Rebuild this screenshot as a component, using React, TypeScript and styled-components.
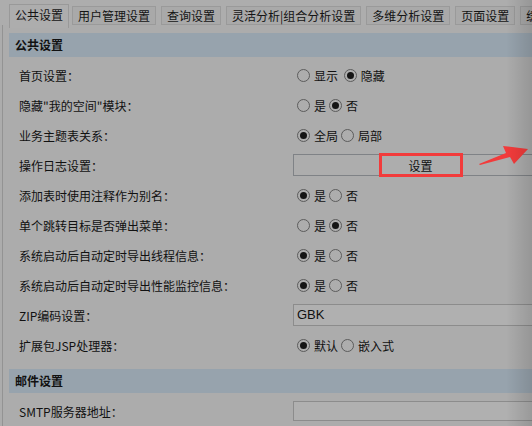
import React from "react";
import styled, { createGlobalStyle } from "styled-components";

const Global = createGlobalStyle`
  html, body { margin: 0; padding: 0; background: #acacac; overflow: hidden; }
  body { font-family: "Noto Sans CJK SC", "Noto Sans", sans-serif; font-size: 12px; color: #111; }
`;

const Page = styled.div`
  position: relative;
  width: 532px;
  height: 426px;
  overflow: hidden;
  background: #acacac;
`;

const Inner = styled.div`
  width: 570px;
`;

const TabBar = styled.div`
  display: flex;
  align-items: flex-end;
  height: 25px;
  padding: 0 0 0 9px;
  gap: 5px;
  background: #adadad;
`;

const Tab = styled.div<{ $active?: boolean }>`
  flex: none;
  box-sizing: border-box;
  height: ${(p) => (p.$active ? "24px" : "19px")};
  margin-bottom: ${(p) => (p.$active ? "-3px" : "0")};
  margin-right: ${(p) => (p.$active ? "-2px" : "0")};
  padding: 0 5px;
  border: 1px solid ${(p) => (p.$active ? "#999" : "#9a9a9a")};
  border-bottom: ${(p) => (p.$active ? "none" : "1px solid #9a9a9a")};
  background: ${(p) => (p.$active ? "#adadad" : "#a9a9a9")};
  line-height: ${(p) => (p.$active ? "20px" : "17px")};
  white-space: nowrap;
  color: #141414;
  position: relative;
  z-index: ${(p) => (p.$active ? 1 : 0)};
`;

const Panel = styled.div`
  margin-left: 2px;
  border-left: 1px solid #939393;
  padding: 8px 0 0 6px;
`;

const SectionHeader = styled.div<{ $gap?: number }>`
  height: 24px;
  line-height: 24px;
  margin-top: ${(p) => p.$gap ?? 0}px;
  padding-left: 6px;
  background: #97a3ad;
  font-weight: bold;
  color: #111;
`;

const Rows = styled.div`
  padding-top: 3px;
`;

const Row = styled.div`
  display: grid;
  grid-template-columns: 284px 255px;
  align-items: center;
  height: 30px;
`;

const Label = styled.div`
  padding-left: 10px;
  white-space: nowrap;
`;

const Options = styled.div`
  display: flex;
  align-items: center;
  gap: 3px;
  padding-left: 4px;
`;

const Option = styled.label`
  display: flex;
  align-items: center;
  gap: 4px;
  white-space: pre;
`;

const Circle = styled.span<{ $on?: boolean }>`
  box-sizing: border-box;
  width: 13px;
  height: 13px;
  border-radius: 50%;
  border: 1px solid #5c5c5c;
  background: #adadad;
  display: flex;
  align-items: center;
  justify-content: center;
  &::after {
    content: "";
    display: ${(p) => (p.$on ? "block" : "none")};
    width: 7px;
    height: 7px;
    border-radius: 50%;
    background: #141414;
  }
`;

const WideButton = styled.div`
  position: relative;
  box-sizing: border-box;
  height: 22px;
  border: 1px solid #7f8286;
  background: #adadad;
  display: flex;
  align-items: center;
  justify-content: center;
`;

const Annot = styled.span`
  position: absolute;
  left: 50%;
  top: 50%;
  width: 84px;
  height: 24px;
  transform: translate(-50%, -50%);
  box-sizing: border-box;
  border: 3px solid #f23b3b;
`;

const TextBox = styled.div<{ $h?: number }>`
  box-sizing: border-box;
  height: ${(p) => p.$h ?? 22}px;
  border: 1px solid #8c8c8c;
  background: #b0b0b0;
  padding-left: 3px;
  line-height: ${(p) => (p.$h ?? 22) - 2}px;
  font-family: "Liberation Sans", Arial, sans-serif;
  font-size: 13px;
  color: #111;
`;

const Shade = styled.div`
  position: absolute;
  top: 0;
  right: 0;
  bottom: 0;
  width: 26px;
  background: linear-gradient(to right, rgba(0, 0, 0, 0), rgba(0, 0, 0, 0.13));
  pointer-events: none;
`;

const ArrowSvg = styled.svg`
  position: absolute;
  left: 476px;
  top: 143px;
  pointer-events: none;
`;

type Opt = { t: string; on?: boolean };

const Radios = ({ opts }: { opts: Opt[] }) => (
  <Options>
    {opts.map((o, i) => (
      <Option key={i}>
        <Circle $on={o.on} />
        {o.t}
      </Option>
    ))}
  </Options>
);

const yesNo = (yes: boolean): Opt[] => [
  { t: "是", on: yes },
  { t: "否", on: !yes },
];

export default function App() {
  return (
    <Page>
      <Global />
      <Inner>
        <TabBar>
          <Tab $active>公共设置</Tab>
          <Tab>用户管理设置</Tab>
          <Tab>查询设置</Tab>
          <Tab>灵活分析|组合分析设置</Tab>
          <Tab>多维分析设置</Tab>
          <Tab>页面设置</Tab>
          <Tab>缓存设置</Tab>
        </TabBar>
        <Panel>
          <SectionHeader>公共设置</SectionHeader>
          <Rows>
            <Row>
              <Label>首页设置：</Label>
              <Radios opts={[{ t: "显示 " }, { t: "隐藏", on: true }]} />
            </Row>
            <Row>
              <Label>隐藏"我的空间"模块：</Label>
              <Radios opts={yesNo(false)} />
            </Row>
            <Row>
              <Label>业务主题表关系：</Label>
              <Radios opts={[{ t: "全局", on: true }, { t: "局部" }]} />
            </Row>
            <Row>
              <Label>操作日志设置：</Label>
              <WideButton>
                设置
                <Annot />
              </WideButton>
            </Row>
            <Row>
              <Label>添加表时使用注释作为别名：</Label>
              <Radios opts={yesNo(true)} />
            </Row>
            <Row>
              <Label>单个跳转目标是否弹出菜单：</Label>
              <Radios opts={yesNo(false)} />
            </Row>
            <Row>
              <Label>系统启动后自动定时导出线程信息：</Label>
              <Radios opts={yesNo(true)} />
            </Row>
            <Row>
              <Label>系统启动后自动定时导出性能监控信息：</Label>
              <Radios opts={yesNo(true)} />
            </Row>
            <Row>
              <Label>ZIP编码设置：</Label>
              <TextBox>GBK</TextBox>
            </Row>
            <Row>
              <Label>扩展包JSP处理器：</Label>
              <Radios opts={[{ t: "默认", on: true }, { t: "嵌入式" }]} />
            </Row>
          </Rows>
          <SectionHeader $gap={9}>邮件设置</SectionHeader>
          <Rows>
            <Row>
              <Label>SMTP服务器地址：</Label>
              <TextBox $h={20} />
            </Row>
          </Rows>
        </Panel>
      </Inner>
      <ArrowSvg width="56" height="26" viewBox="0 0 56 26">
        <polygon
          points="3,21 30,10 27,3 52,6 38,21 34,14 4,22"
          fill="#f23b3b"
        />
      </ArrowSvg>
      <Shade />
    </Page>
  );
}
